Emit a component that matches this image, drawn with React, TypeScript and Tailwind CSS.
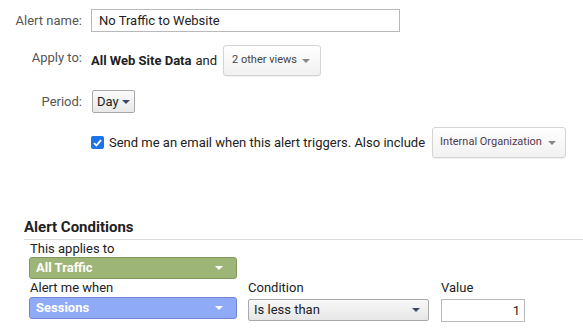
import React from 'react';

const Caret: React.FC<{ className?: string }> = ({ className }) => (
  <svg width="8" height="4" viewBox="0 0 8 4" className={`shrink-0 ${className ?? ''}`}>
    <path d="M0 0h8L4 4z" fill="currentColor" />
  </svg>
);

const GrayDropdown: React.FC<{ label: string; className?: string }> = ({ label, className }) => (
  <div
    className={`flex shrink-0 items-center justify-between whitespace-nowrap rounded-[3px] border border-[#d4d4d4] bg-gradient-to-b from-white to-[#f1f1f1] text-[11px] text-[#444] shadow-[0_1px_1px_rgba(0,0,0,0.06)] ${className ?? ''}`}
  >
    <span>{label}</span>
    <Caret className="text-[#888]" />
  </div>
);

const ColorDropdown: React.FC<{ label: string; tone: 'green' | 'blue' }> = ({ label, tone }) => (
  <div
    className={`flex h-[22px] w-[208px] items-center justify-between rounded-[3px] border pl-[6px] pr-[13px] text-[13px] font-bold text-white ${
      tone === 'green' ? 'border-[#7f9a5a] bg-[#9db577]' : 'border-[#6f86d6] bg-[#8faaf6]'
    }`}
  >
    <span>{label}</span>
    <Caret className="text-white" />
  </div>
);

const App: React.FC = () => {
  return (
    <div className="h-[330px] w-[583px] overflow-hidden bg-white font-['Roboto',sans-serif] text-[13px] text-[#222]">
      {/* alert settings */}
      <div className="pt-[9px]">
        <div className="flex items-center">
          <div className="w-[83px] pr-[1px] text-right text-[#555]">Alert name:</div>
          <div className="ml-[8px] flex h-[23px] w-[309px] items-center border border-[#b9b9b9] px-[7px] text-[13px] text-[#222]">
            No Traffic to Website
          </div>
        </div>

        <div className="mt-[13px] flex items-center">
          <div className="-mt-[6px] w-[82px] text-right text-[#555]">Apply to:</div>
          <div className="ml-[9px] flex items-center whitespace-nowrap">
            <span className="font-bold">All Web Site Data</span>
            <span className="ml-[4px]">and</span>
            <GrayDropdown label="2 other views" className="ml-[6px] h-[31px] w-[98px] pl-[8px] pr-[10px]" />
          </div>
        </div>

        <div className="mt-[14px] flex items-center">
          <div className="w-[82px] text-right text-[#555]">Period:</div>
          <div className="ml-[10px] flex h-[23px] w-[43px] items-center justify-between rounded-[2px] border border-[#a9a9a9] bg-gradient-to-b from-[#fafafa] to-[#e9e9e9] px-[4px] text-[13px]">
            <span>Day</span>
            <Caret className="text-[#3c4a66]" />
          </div>
        </div>

        <div className="mt-[14px] flex items-center whitespace-nowrap">
          <div className="ml-[91px] flex h-[13px] w-[13px] shrink-0 items-center justify-center rounded-[2px] bg-[#1a73e8]">
            <svg width="9" height="8" viewBox="0 0 9 8">
              <path d="M1 4.2 3.4 6.5 8 1.2" fill="none" stroke="white" strokeWidth="1.8" />
            </svg>
          </div>
          <span className="ml-[5px] text-[13px]">Send me an email when this alert triggers. Also include</span>
          <GrayDropdown label="Internal Organization" className="ml-[7px] h-[31px] w-[134px] pl-[7px] pr-[9px] text-[#503a50]" />
        </div>
      </div>

      {/* alert conditions */}
      <div className="mt-[61px] pl-[24px]">
        <div className="border-b border-[#dcdcdc] pb-[3px] text-[15px] font-bold leading-[17px]">Alert Conditions</div>
        <div className="pl-[5px]">
          <div className="pl-[1px] pt-[1px] leading-[16px]">This applies to</div>
          <ColorDropdown label="All Traffic" tone="green" />
          <div className="flex">
            <div className="flex flex-col">
              <div className="pl-[1px] leading-[18px]">Alert me when</div>
              <ColorDropdown label="Sessions" tone="blue" />
            </div>
            <div className="ml-[11px] flex flex-col">
              <div className="leading-[18px]">Condition</div>
              <div className="mt-[2px] flex h-[22px] w-[181px] items-center justify-between rounded-[2px] border border-[#a9a9a9] bg-gradient-to-b from-[#f8f8f8] to-[#e6e6e6] pl-[5px] pr-[8px] text-[13px]">
                <span>Is less than</span>
                <Caret className="text-[#3c4a66]" />
              </div>
            </div>
            <div className="ml-[12px] flex flex-col">
              <div className="leading-[18px]">Value</div>
              <div className="mt-[2px] flex h-[23px] w-[84px] items-center justify-end border border-[#b9b9b9] pr-[4px] text-[13px]">
                1
              </div>
            </div>
          </div>
        </div>
      </div>
    </div>
  );
};

export default App;
